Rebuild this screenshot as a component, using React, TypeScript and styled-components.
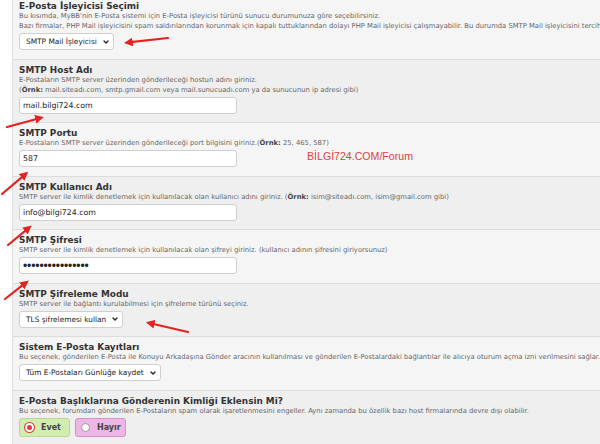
import styled, { createGlobalStyle } from "styled-components";
import { ChevronDown } from "lucide-react";

const GlobalStyle = createGlobalStyle`
  html, body {
    margin: 0;
    padding: 0;
    background: #ffffff;
    overflow: hidden;
  }
  body {
    font-family: "DejaVu Sans", Verdana, sans-serif;
    color: #333;
  }
`;

type Setting = {
  title: string;
  desc: React.ReactNode[];
  control: React.ReactNode;
};

const Page = styled.div`
  position: relative;
  width: 600px;
  height: 444px;
  overflow: hidden;
  padding-left: 12px;
  box-sizing: border-box;
`;

const Panel = styled.div`
  width: 900px;
  margin-top: -5px;
  border-left: 1px solid #dedede;
`;

const Row = styled.div<{ $alt: boolean }>`
  background: ${({ $alt }) => ($alt ? "#efefef" : "#f5f5f5")};
  border-top: 1px solid #dcdcdc;
  padding: 5px 6px 8.5px;
  white-space: nowrap;
`;

const Title = styled.div`
  font-size: 8.9px;
  line-height: 10px;
  font-weight: 700;
  color: #333;
`;

const Desc = styled.div`
  font-size: 6.8px;
  line-height: 10px;
  color: #666;

  b {
    color: #444;
  }
`;

const Control = styled.div`
  margin-top: 2px;
  display: flex;
  gap: 5px;
`;

const TextBox = styled.div<{ $dots?: boolean }>`
  width: 218px;
  height: 17px;
  box-sizing: border-box;
  border: 1px solid #cfcfcf;
  border-radius: 3px;
  background: #fff;
  padding-left: 3px;
  display: flex;
  align-items: center;
  font-family: ${({ $dots }) => ($dots ? '"Liberation Sans", Arial, sans-serif' : "inherit")};
  font-size: ${({ $dots }) => ($dots ? "12px" : "7.8px")};
  letter-spacing: ${({ $dots }) => ($dots ? "-0.1px" : "0")};
  color: #222;
`;

const SelectBox = styled.div`
  height: 17px;
  box-sizing: border-box;
  border: 1px solid #cfcfcf;
  border-radius: 3px;
  background: #fff;
  padding: 0 3px 0 6px;
  display: inline-flex;
  align-items: center;
  gap: 5px;
  font-size: 7.4px;
  color: #222;
`;

const RadioOption = styled.div<{ $tone: "green" | "pink" }>`
  width: 51px;
  height: 19px;
  box-sizing: border-box;
  border-radius: 3px;
  border: 1px solid ${({ $tone }) => ($tone === "green" ? "#b9d98e" : "#d692c8")};
  background: ${({ $tone }) => ($tone === "green" ? "#d3ecb0" : "#eeb6e4")};
  display: flex;
  align-items: center;
  gap: 7px;
  padding-left: 5px;
  font-size: 8px;
  font-weight: 700;
  color: #444;
`;

const RadioDot = styled.span<{ $checked: boolean }>`
  width: 9px;
  height: 9px;
  border-radius: 50%;
  box-sizing: border-box;
  border: ${({ $checked }) => ($checked ? "2px solid #fff" : "1px solid #999")};
  box-shadow: ${({ $checked }) => ($checked ? "0 0 0 1px #e0393b" : "none")};
  background: ${({ $checked }) => ($checked ? "#e0393b" : "#fff")};
`;

const Overlay = styled.svg`
  position: absolute;
  inset: 0;
  pointer-events: none;
`;

const Watermark = styled.div`
  position: absolute;
  left: 307px;
  top: 150px;
  font-size: 10.6px;
  color: #e2403c;
  font-family: "Liberation Sans", Arial, sans-serif;
`;

const Select = ({ label }: { label: string }) => (
  <SelectBox>
    {label}
    <ChevronDown size={8} strokeWidth={4} color="#222" />
  </SelectBox>
);

const settings: Setting[] = [
  {
    title: "E-Posta İşleyicisi Seçimi",
    desc: [
      "Bu kısımda, MyBB'nin E-Posta sistemi için E-Posta işleyicisi türünü sunucu durumunuza göre seçebilirsiniz.",
      "Bazı firmalar, PHP Mail işleyicisini spam saldırılarından korunmak için kapalı tuttuklarından dolayı PHP Mail işleyicisi çalışmayabilir. Bu durumda SMTP Mail işleyicisini tercih ediniz.",
    ],
    control: <Select label="SMTP Mail İşleyicisi" />,
  },
  {
    title: "SMTP Host Adı",
    desc: [
      "E-Postaların SMTP server üzerinden gönderileceği hostun adını giriniz.",
      <>
        (<b>Örnk:</b> mail.siteadı.com, smtp.gmail.com veya mail.sunucuadı.com ya da sunucunun ip adresi gibi)
      </>,
    ],
    control: <TextBox>mail.bilgi724.com</TextBox>,
  },
  {
    title: "SMTP Portu",
    desc: [
      <>
        E-Postaların SMTP server üzerinden gönderileceği port bilgisini giriniz.(<b>Örnk:</b> 25, 465, 587)
      </>,
    ],
    control: <TextBox>587</TextBox>,
  },
  {
    title: "SMTP Kullanıcı Adı",
    desc: [
      <>
        SMTP server ile kimlik denetlemek için kullanılacak olan kullanıcı adını giriniz. (<b>Örnk:</b> isim@siteadı.com, isim@gmail.com gibi)
      </>,
    ],
    control: <TextBox>info@bilgi724.com</TextBox>,
  },
  {
    title: "SMTP Şifresi",
    desc: ["SMTP server ile kimlik denetlemek için kullanılacak olan şifreyi giriniz. (kullanıcı adının şifresini giriyorsunuz)"],
    control: <TextBox $dots>••••••••••••••••</TextBox>,
  },
  {
    title: "SMTP Şifreleme Modu",
    desc: ["SMTP server ile bağlantı kurulabilmesi için şifreleme türünü seçiniz."],
    control: <Select label="TLS şifrelemesi kullan" />,
  },
  {
    title: "Sistem E-Posta Kayıtları",
    desc: [
      "Bu seçenek, gönderilen E-Posta ile Konuyu Arkadaşına Gönder aracının kullanılması ve gönderilen E-Postalardaki bağlantılar ile alıcıya oturum açma izni verilmesini sağlar.",
    ],
    control: <Select label="Tüm E-Postaları Günlüğe kaydet" />,
  },
  {
    title: "E-Posta Başlıklarına Gönderenin Kimliği Eklensin Mi?",
    desc: [
      "Bu seçenek, forumdan gönderilen E-Postaların spam olarak işaretlenmesini engeller. Aynı zamanda bu özellik bazı host firmalarında devre dışı olabilir.",
    ],
    control: (
      <>
        <RadioOption $tone="green">
          <RadioDot $checked />
          Evet
        </RadioOption>
        <RadioOption $tone="pink">
          <RadioDot $checked={false} />
          Hayır
        </RadioOption>
      </>
    ),
  },
];

// tail -> head, hand-drawn annotation arrows
const arrows = [
  [168, 38, 123, 43],
  [7, 127, 44, 117],
  [2, 194, 28, 172],
  [8, 245, 31, 226],
  [5, 299, 28, 281],
  [188, 332, 145, 322],
];

const App = () => (
  <>
    <GlobalStyle />
    <Page>
      <Panel>
        {settings.map((s, i) => (
          <Row key={s.title} $alt={i % 2 === 1}>
            <Title>{s.title}</Title>
            {s.desc.map((d, j) => (
              <Desc key={j}>{d}</Desc>
            ))}
            <Control>{s.control}</Control>
          </Row>
        ))}
      </Panel>

      <Watermark>BİLGİ724.COM/Forum</Watermark>

      <Overlay width="600" height="444" viewBox="0 0 600 444">
        <defs>
          <marker id="head" markerWidth="4" markerHeight="4" refX="2" refY="2" orient="auto" markerUnits="strokeWidth">
            <path d="M0,0 L4,2 L0,4 Z" fill="#e32222" />
          </marker>
        </defs>
        {arrows.map(([x1, y1, x2, y2], i) => (
          <line
            key={i}
            x1={x1}
            y1={y1}
            x2={x2 - (x2 - x1) * 0.12}
            y2={y2 - (y2 - y1) * 0.12}
            stroke="#e32222"
            strokeWidth={2.2}
            strokeLinecap="round"
            markerEnd="url(#head)"
          />
        ))}
      </Overlay>
    </Page>
  </>
);

export default App;
